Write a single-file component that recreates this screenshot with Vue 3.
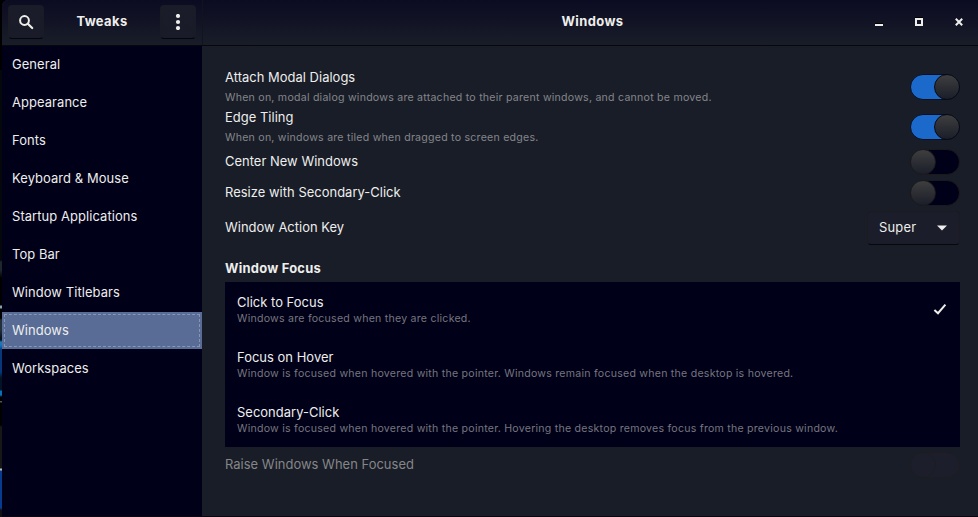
<script setup>
import { ref } from 'vue'

const sections = [
  'General', 'Appearance', 'Fonts', 'Keyboard & Mouse', 'Startup Applications',
  'Top Bar', 'Window Titlebars', 'Windows', 'Workspaces',
]
const current = ref('Windows')

const switches = ref([
  { label: 'Attach Modal Dialogs', note: 'When on, modal dialog windows are attached to their parent windows, and cannot be moved.', on: true },
  { label: 'Edge Tiling', note: 'When on, windows are tiled when dragged to screen edges.', on: true },
  { label: 'Center New Windows', on: false },
  { label: 'Resize with Secondary-Click', on: false },
])

const focusModes = [
  { label: 'Click to Focus', note: 'Windows are focused when they are clicked.' },
  { label: 'Focus on Hover', note: 'Window is focused when hovered with the pointer. Windows remain focused when the desktop is hovered.' },
  { label: 'Secondary-Click', note: 'Window is focused when hovered with the pointer. Hovering the desktop removes focus from the previous window.' },
]
const focusMode = ref('Click to Focus')
</script>

<template>
  <div class="desktop">
    <div class="window">
      <header class="titlebar">
        <div class="side-head">
          <button class="tool" aria-label="Search">
            <svg width="16" height="16" viewBox="0 0 16 16">
              <circle cx="6.5" cy="6.5" r="4.4" fill="none" stroke="#eeeeec" stroke-width="2" />
              <path d="M9.8 9.8 L14.2 14" stroke="#eeeeec" stroke-width="2.2" stroke-linecap="round" />
            </svg>
          </button>
          <h1>Tweaks</h1>
          <button class="tool" aria-label="Menu">
            <svg width="16" height="16" viewBox="0 0 16 16" fill="#eeeeec">
              <circle cx="8" cy="2" r="2.1" /><circle cx="8" cy="8" r="2.1" /><circle cx="8" cy="14" r="2.1" />
            </svg>
          </button>
        </div>
        <div class="main-head">
          <h1>Windows</h1>
          <div class="controls">
            <svg width="10" height="10" viewBox="0 0 10 10"><path d="M1 6h8v1H1z" fill="#000" /><path d="M1 7h8v2H1z" fill="#eeeeec" /></svg>
            <svg width="10" height="10" viewBox="0 0 10 10"><path d="M1 0h8v1H1z" fill="#000" /><path d="M2 2h6v6H2z" fill="none" stroke="#eeeeec" stroke-width="2" /></svg>
            <svg width="10" height="10" viewBox="0 0 10 10"><path d="M1.8 1.8 L8.2 8.2 M8.2 1.8 L1.8 8.2" stroke="#eeeeec" stroke-width="2" /></svg>
          </div>
        </div>
      </header>

      <div class="body">
        <nav class="sidebar">
          <a v-for="s in sections" :key="s" class="section" :class="{ active: s === current }" @click="current = s">{{ s }}</a>
        </nav>

        <main class="page">
          <div v-for="s in switches" :key="s.label" class="row" :class="{ tall: s.note }">
            <div class="words">
              <div class="label">{{ s.label }}</div>
              <div v-if="s.note" class="note">{{ s.note }}</div>
            </div>
            <div class="switch" :class="{ on: s.on }" @click="s.on = !s.on"><span class="knob"></span></div>
          </div>

          <div class="row choice">
            <div class="label">Window Action Key</div>
            <button class="combo">
              <span>Super</span>
              <svg width="10" height="6" viewBox="0 0 10 6"><path d="M0 0.4h10L5 5.4z" fill="#eeeeec" /></svg>
            </button>
          </div>

          <h2>Window Focus</h2>
          <ul class="modes">
            <li v-for="m in focusModes" :key="m.label" class="mode" @click="focusMode = m.label">
              <div class="words">
                <div class="label">{{ m.label }}</div>
                <div class="note">{{ m.note }}</div>
              </div>
              <svg v-if="m.label === focusMode" width="16" height="16" viewBox="0 0 16 16">
                <path d="M2.4 7.9 L6 11.2 L13.4 2.7" fill="none" stroke="#eeeeec" stroke-width="2" />
              </svg>
            </li>
          </ul>

          <div class="row raise">
            <div class="label">Raise Windows When Focused</div>
            <div class="switch disabled"><span class="knob"></span></div>
          </div>
        </main>
      </div>
    </div>
  </div>
</template>

<style>
body { background: #000; overflow: hidden; }
</style>

<style scoped>
* { box-sizing: border-box; }
.desktop {
  height: 517px;
  padding-left: 2px;
  background:
    linear-gradient(#000 0 70px, #04080b 70px 260px, #20272c 262px 270px, #000 278px 305px, #8ba0ad 306px 308px, #000 309px 318px, #22303c 320px 330px, #06121c 338px 340px, #1878bd 342px 345px, #07377a 350px 372px, #031225 378px 390px, #0871b5 391px 395px, #000 397px 401px, #555 401px 402px, #000 403px 425px, #171717 427px 468px, #bbb 469px 470px, #063b8e 471px 508px, #111 510px);
  font-family: Inter, sans-serif;
  font-size: 12.95px;
  font-weight: 375;
  letter-spacing: 0.03px;
  color: #eeeeec;
}
.window {
  height: 517px;
  display: flex;
  flex-direction: column;
  background: #191d28;
  border-top-left-radius: 6px;
  border-bottom: 1px solid #0c0410;
  overflow: hidden;
}
.titlebar {
  flex: none;
  height: 46px;
  display: flex;
  background: linear-gradient(#0b0b22, #191d28);
  border-bottom: 1px solid #07080d;
}
h1, h2 { margin: 0; font-size: 12.95px; line-height: 16px; font-weight: 680; letter-spacing: 0.4px; }
h1 { padding-bottom: 1px; }
.side-head {
  width: 201px;
  padding: 0 6px 2px;
  display: flex;
  align-items: center;
  justify-content: space-between;
  border-right: 1px solid #11131d;
}
.tool {
  width: 36px;
  height: 34px;
  padding: 0;
  display: flex;
  align-items: center;
  justify-content: center;
  border: 1px solid #1a1c23;
  border-bottom-color: #05060a;
  border-radius: 4px;
  background: linear-gradient(#1a1d29, #191c28);
}
.main-head {
  flex: 1;
  padding: 0 14px 2px 0;
  display: grid;
  grid-template-columns: 113px 1fr 95px;
  align-items: center;
}
.main-head h1 { grid-column: 2; text-align: center; }
.controls { display: flex; justify-content: flex-end; gap: 30px; }
.body { flex: 1; display: flex; min-height: 0; }
.sidebar {
  width: 200px;
  display: flex;
  flex-direction: column;
  gap: 1px;
  background: #000018;
}
.section {
  height: 37px;
  padding-left: 10px;
  line-height: 37px;
  letter-spacing: 0.08px;
}
.section.active {
  background: #586c96;
  outline: 1px dashed #8796b5;
  outline-offset: -3px;
}
.page { flex: 1; padding: 21px 18px 0 23px; }
.row { height: 26px; margin-bottom: 5px; display: flex; align-items: center; justify-content: space-between; }
.row.tall { height: 40px; margin: 0; }
.row.tall + .row:not(.tall) { margin-top: 2px; }
.label { line-height: 20px; }
.row:not(.tall) .label { line-height: 18px; padding-bottom: 2px; }
.note { font-size: 10.6px; font-weight: 400; line-height: 19px; letter-spacing: 0.235px; color: #84868a; }
.tall .label { line-height: 20px; }
.tall .note { height: 20px; padding-top: 1px; }
.switch {
  width: 50px;
  height: 26px;
  display: flex;
  border: 1px solid #1a1a1c;
  border-radius: 13px;
  background: #000018;
}
.switch.on { justify-content: flex-end; background: #1b6acb; border-color: #081020; }
.knob {
  width: 26px;
  height: 26px;
  margin: -1px;
  border: 1px solid #1b1b1d;
  border-radius: 50%;
  background: linear-gradient(#3e3e3e, #1b1e2a);
}
.on .knob { border-color: #070a14; }
.switch.disabled, .disabled .knob { background: #1c1e2c; border-color: #1d1d20; }
.row.choice { height: 34px; margin: 0; }
.combo {
  width: 93px;
  height: 34px;
  padding: 0 12px 2px 11px;
  display: flex;
  align-items: center;
  justify-content: space-between;
  border: 1px solid #1b1b20;
  border-bottom-color: #06070b;
  border-radius: 4px;
  background: #1b1d2a;
  font: inherit;
  line-height: 16px;
  letter-spacing: 0.2px;
  color: inherit;
}
.combo svg { margin-top: 2px; }
h2 { margin-top: 13px; height: 24px; line-height: 20px; letter-spacing: 0.25px; }
.modes { margin: 0; padding: 0; list-style: none; background: #000018; }
.mode { height: 55px; padding: 0 12px; display: flex; align-items: center; justify-content: space-between; }
.mode .words { height: 33px; padding-top: 1px; }
.mode .label { line-height: 16px; }
.mode .note { line-height: 17px; color: #76767f; }
.row.raise { margin-top: 5px; color: #858687; }
</style>
